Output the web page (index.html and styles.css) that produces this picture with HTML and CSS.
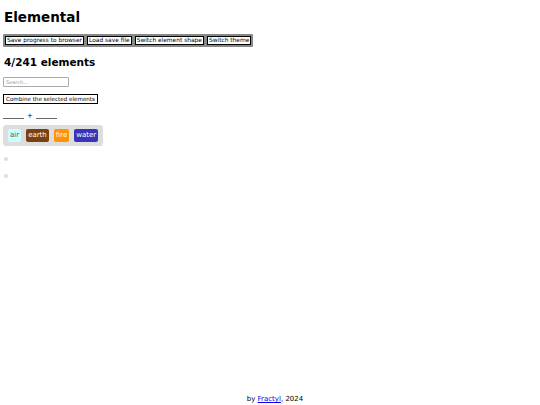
FILE: index.html
```html
<!DOCTYPE html>
<html lang="en">

<head>
    <meta charset="UTF-8">
    <meta name="viewport" content="width=device-width, initial-scale=1.0">
    <title>Elemental</title>
    <link rel="stylesheet" href="styles.css">
</head>

<body>
    <h1>Elemental</h1>

    <div class="toolbar">
        <button>Save progress to browser</button>
        <button>Load save file</button>
        <button>Switch element shape</button>
        <button>Switch theme</button>
    </div>

    <h2>4/241 elements</h2>

    <input class="search" type="text" placeholder="Search...">

    <button class="combine">Combine the selected elements</button>

    <div class="slots">
        <span class="slot"></span> + <span class="slot"></span>
    </div>

    <div class="elements">
        <span class="el air">air</span>
        <span class="el earth">earth</span>
        <span class="el fire">fire</span>
        <span class="el water">water</span>
    </div>

    <div class="dot"></div>
    <div class="dot"></div>

    <footer>by <a href="#">Fractyl</a>, 2024</footer>
</body>

</html>
```

FILE: styles.css
```css
* {
    margin: 0;
    padding: 0;
    box-sizing: border-box;
}

body {
    font-family: "DejaVu Sans", Verdana, sans-serif;
    font-size: 7px;
    color: #000;
    background-color: #fff;
    padding: 0 3px;
    min-height: 100vh;
    display: flex;
    flex-direction: column;
    align-items: flex-start;
}

h1 {
    font-size: 13.5px;
    margin-top: 9px;
    line-height: 16px;
    padding-left: 1px;
}

.toolbar {
    display: flex;
    gap: 3px;
    background-color: #888;
    padding: 2px;
    margin-top: 9px;
    border-radius: 1px;
}

button {
    font-family: "DejaVu Sans", Verdana, sans-serif;
    font-size: 5.9px;
    color: #000;
    background-color: #fff;
    border: 1px solid #000;
    padding: 0 1px;
    height: 9px;
    line-height: 7px;
}

h2 {
    font-size: 10.5px;
    margin-top: 9px;
    line-height: 13px;
    padding-left: 1px;
}

.search {
    font-family: "DejaVu Sans", Verdana, sans-serif;
    font-size: 5px;
    width: 66px;
    height: 10px;
    border: 1px solid #aaa;
    padding: 0 2px;
    margin-top: 8px;
    border-radius: 1px;
}

.search::placeholder {
    color: #999;
}

.combine {
    margin-top: 7px;
    height: 10px;
    font-size: 5.6px;
    padding: 0 2px;
}

.slots {
    margin-top: 8px;
    font-size: 7px;
    line-height: 8px;
    display: flex;
    align-items: center;
    gap: 3px;
}

.slot {
    display: inline-block;
    width: 21px;
    border-bottom: 1px solid #666;
    height: 5px;
}

.elements {
    display: flex;
    gap: 5px;
    background-color: #ddd;
    padding: 4px 5px;
    border-radius: 3px;
    margin-top: 5px;
}

.el {
    font-size: 7px;
    line-height: 13px;
    padding: 0 2px;
    border-radius: 2px;
    color: #fff;
}

.air {
    background-color: #ccffff;
    color: #555;
}

.earth {
    background-color: #7a4210;
}

.fire {
    background-color: #ff9400;
}

.water {
    background-color: #3a34b8;
}

.dot {
    width: 4px;
    height: 4px;
    border-radius: 50%;
    background-color: #ddd;
    margin-left: 1px;
    margin-top: 11px;
}

.dot + .dot {
    margin-top: 13px;
}

footer {
    margin-top: auto;
    align-self: center;
    padding-left: 10px;
    margin-bottom: 2px;
    line-height: 8px;
}

footer a {
    color: #00e;
}
```
